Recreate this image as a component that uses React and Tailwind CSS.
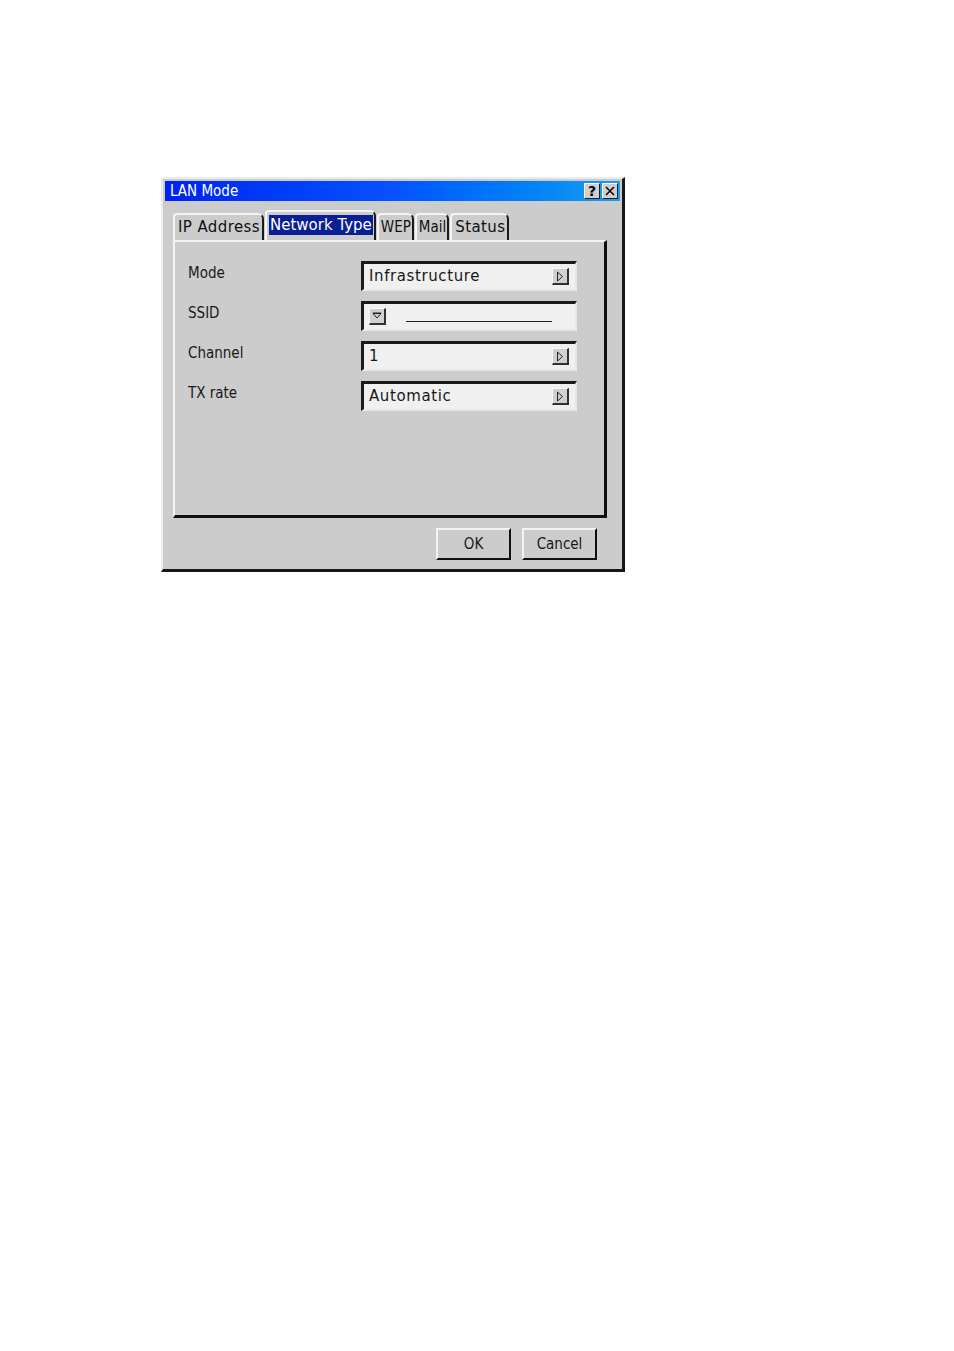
import React from "react";

const font = { fontFamily: '"DejaVu Sans", "Liberation Sans", sans-serif' };
const narrow = { fontFamily: '"DejaVu Sans Condensed", "Liberation Sans Narrow", "DejaVu Sans", sans-serif' };

function ArrowBtn({ down }) {
    return (
        <span className="flex h-[17px] w-[17px] items-center justify-center border-l border-t border-[#f8f8f8] border-r-2 border-b-2 border-r-[#303030] border-b-[#303030] bg-[#d0d0d0]">
            {down ? (
                <svg width="10" height="8" viewBox="0 0 10 8"><path d="M1 1.5h8L5 6z" fill="none" stroke="#202020" strokeWidth="1" /><path d="M1 1h8" stroke="#202020" /></svg>
            ) : (
                <svg width="8" height="11" viewBox="0 0 8 11"><path d="M1.5 1v9L6.5 5.5z" fill="none" stroke="#202020" strokeWidth="1" /></svg>
            )}
        </span>
    );
}

function Field({ children }) {
    return (
        <div className="flex h-[30px] w-[216px] items-center border-l-[3px] border-t-[3px] border-[#1a1a1a] border-r-2 border-b-2 border-r-[#e8e8e8] border-b-[#e8e8e8] bg-[#f0f0f0] pl-[5px] pr-[6px]">
            {children}
        </div>
    );
}

function Tab({ label, active, condensed }) {
    let pad = "pl-[3px] pr-[2px] tracking-[0.4px]";
    if (condensed) pad = "pl-[2px] pr-[1px]";
    if (active) pad = "pl-[2px] pr-[1px]";
    return (
        <div className={`flex items-center border-l-2 border-t-2 border-[#f4f4f4] border-r-2 border-r-[#1a1a1a] rounded-tl-[4px] rounded-tr-[6px] pb-[2px] ${pad} ${active ? "h-[30px]" : "h-[27px]"}`} style={condensed ? narrow : undefined}>
            <span className={active ? "bg-[#0a1e96] text-white px-[1px] leading-[20px]" : "text-[#101010] leading-[20px]"}>{label}</span>
        </div>
    );
}

export default function App() {
    const rows = [
        { label: "Mode", value: "Infrastructure" },
        { label: "SSID", ssid: true },
        { label: "Channel", value: "1" },
        { label: "TX rate", value: "Automatic" },
    ];

    return (
        <div className="min-h-[1351px] w-full bg-white pl-[161px] pt-[177px]" style={font}>
            <div className="flex h-[395px] w-[464px] flex-col border-l-2 border-t-2 border-[#ececec] border-r-[3px] border-b-[3px] border-r-[#181818] border-b-[#181818] bg-[#cccccc] p-[2px]">
                {/* title bar */}
                <div className="flex h-[20px] items-center justify-between bg-gradient-to-r from-[#0020f0] via-[#0a50ff] to-[#1c9cf0] pl-[5px] pr-[2px]">
                    <span className="text-[15px] leading-none text-white" style={narrow}>LAN Mode</span>
                    <div className="flex gap-[2px]">
                        <span className="flex h-[16px] w-[16px] items-center justify-center border-l border-t border-white border-r border-b border-r-[#202020] border-b-[#202020] bg-[#d0d0d0] text-[14px] font-bold leading-none text-black">?</span>
                        <span className="flex h-[16px] w-[16px] items-center justify-center border-l border-t border-white border-r border-b border-r-[#202020] border-b-[#202020] bg-[#d0d0d0]">
                            <svg width="10" height="10" viewBox="0 0 10 10"><path d="M1 1l8 8M9 1l-8 8" stroke="#000" strokeWidth="1.5" /></svg>
                        </span>
                    </div>
                </div>

                {/* tabs */}
                <div className="mt-[9px] flex items-end gap-[1px] pl-[8px] text-[15px]">
                    <Tab label="IP Address" />
                    <Tab label="Network Type" active />
                    <Tab label="WEP" condensed />
                    <Tab label="Mail" condensed />
                    <Tab label="Status" />
                </div>

                {/* panel */}
                <div className="ml-[8px] flex h-[278px] w-[434px] flex-col border-l-2 border-t-2 border-[#f4f4f4] border-r-[3px] border-b-[3px] border-r-[#101010] border-b-[#101010] pl-[13px] pt-[19px]">
                    <div className="flex flex-col gap-[10px]">
                        {rows.map((r) => (
                            <div key={r.label} className="flex items-center">
                                <span className="w-[173px] -mt-[6px] text-[15px] text-[#181818]" style={narrow}>{r.label}</span>
                                <Field>
                                    {r.ssid ? (
                                        <>
                                            <ArrowBtn down />
                                            <span className="ml-[20px] mt-[10px] h-px w-[146px] bg-[#202020]" />
                                        </>
                                    ) : (
                                        <>
                                            <span className="flex-1 text-[15px] tracking-[0.6px] text-[#181818]">{r.value}</span>
                                            <ArrowBtn />
                                        </>
                                    )}
                                </Field>
                            </div>
                        ))}
                    </div>
                </div>

                {/* buttons */}
                <div className="mt-[10px] flex justify-end gap-[11px] pr-[23px]">
                    {["OK", "Cancel"].map((b) => (
                        <button key={b} className="flex h-[32px] w-[75px] items-center justify-center border-l-2 border-t-2 border-[#f4f4f4] border-r-2 border-b-2 border-r-[#101010] border-b-[#101010] bg-[#cccccc] text-[15px] text-[#181818]" style={narrow}>
                            {b}
                        </button>
                    ))}
                </div>
            </div>
        </div>
    );
}
